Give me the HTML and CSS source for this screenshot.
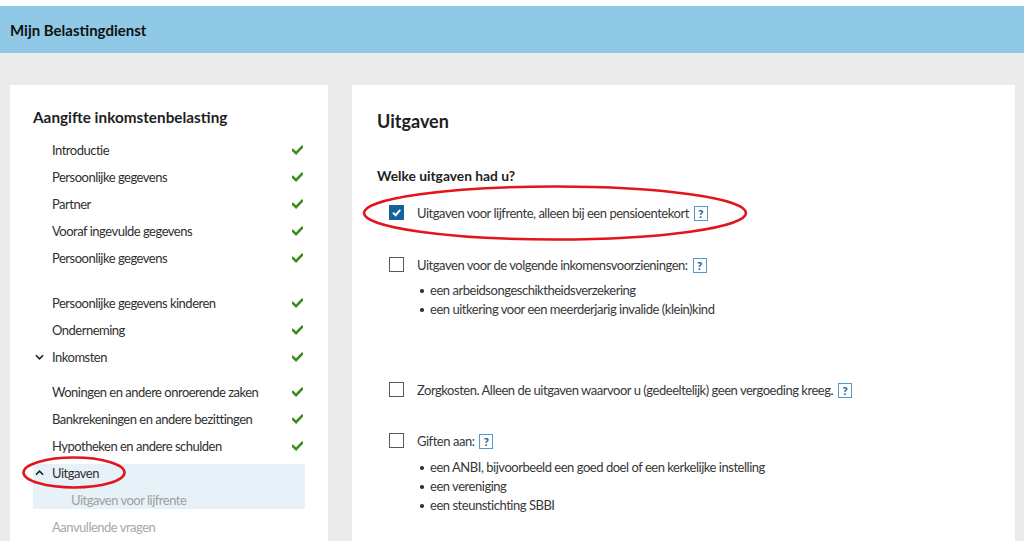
FILE: index.html
```html
<!DOCTYPE html>
<html lang="nl">
<head>
<meta charset="utf-8">
<title>Mijn Belastingdienst - Uitgaven</title>
<link rel="stylesheet" href="styles.css">
</head>
<body>
<div class="page">
  <div class="topstrip"></div>
  <header class="header"><span class="brand">Mijn Belastingdienst</span></header>
  <main class="main">
    <aside class="sidebar">
      <h2 class="side-title">Aangifte inkomstenbelasting</h2>
      <ul class="nav">
        <li class="nav-item"><span class="slot"></span><span class="label">Introductie</span><svg class="check" viewBox="0 0 12 10"><path d="M1 5.2 L4.4 8.4 L11 1.6"/></svg></li>
        <li class="nav-item"><span class="slot"></span><span class="label">Persoonlijke gegevens</span><svg class="check" viewBox="0 0 12 10"><path d="M1 5.2 L4.4 8.4 L11 1.6"/></svg></li>
        <li class="nav-item"><span class="slot"></span><span class="label">Partner</span><svg class="check" viewBox="0 0 12 10"><path d="M1 5.2 L4.4 8.4 L11 1.6"/></svg></li>
        <li class="nav-item"><span class="slot"></span><span class="label">Vooraf ingevulde gegevens</span><svg class="check" viewBox="0 0 12 10"><path d="M1 5.2 L4.4 8.4 L11 1.6"/></svg></li>
        <li class="nav-item"><span class="slot"></span><span class="label">Persoonlijke gegevens</span><svg class="check" viewBox="0 0 12 10"><path d="M1 5.2 L4.4 8.4 L11 1.6"/></svg></li>
        <li class="nav-item group-start"><span class="slot"></span><span class="label">Persoonlijke gegevens kinderen</span><svg class="check" viewBox="0 0 12 10"><path d="M1 5.2 L4.4 8.4 L11 1.6"/></svg></li>
        <li class="nav-item"><span class="slot"></span><span class="label">Onderneming</span><svg class="check" viewBox="0 0 12 10"><path d="M1 5.2 L4.4 8.4 L11 1.6"/></svg></li>
        <li class="nav-item"><span class="slot"><svg class="chev" viewBox="0 0 10 6"><path d="M1 1 L5 5 L9 1"/></svg></span><span class="label">Inkomsten</span><svg class="check" viewBox="0 0 12 10"><path d="M1 5.2 L4.4 8.4 L11 1.6"/></svg></li>
        <li class="nav-item sub-start"><span class="slot"></span><span class="label">Woningen en andere onroerende zaken</span><svg class="check" viewBox="0 0 12 10"><path d="M1 5.2 L4.4 8.4 L11 1.6"/></svg></li>
        <li class="nav-item"><span class="slot"></span><span class="label">Bankrekeningen en andere bezittingen</span><svg class="check" viewBox="0 0 12 10"><path d="M1 5.2 L4.4 8.4 L11 1.6"/></svg></li>
        <li class="nav-item"><span class="slot"></span><span class="label">Hypotheken en andere schulden</span><svg class="check" viewBox="0 0 12 10"><path d="M1 5.2 L4.4 8.4 L11 1.6"/></svg></li>
        <li class="nav-active">
          <div class="nav-row"><span class="slot"><svg class="chev" viewBox="0 0 10 6"><path d="M1 5 L5 1 L9 5"/></svg></span><span class="label">Uitgaven</span></div>
          <div class="nav-row nav-sub"><span class="label">Uitgaven voor lijfrente</span></div>
        </li>
        <li class="nav-item disabled"><span class="slot"></span><span class="label">Aanvullende vragen</span></li>
      </ul>
    </aside>
    <section class="content">
      <h1 class="title">Uitgaven</h1>
      <h3 class="question">Welke uitgaven had u?</h3>
      <div class="option">
        <span class="box checked"><svg viewBox="0 0 15 15"><path d="M4 7.6 L6.6 10.2 L11.2 4.8"/></svg></span>
        <div class="opt-body">
          <div class="opt-label">Uitgaven voor lijfrente, alleen bij een pensioentekort <span class="help">?</span></div>
        </div>
      </div>
      <div class="option opt-2">
        <span class="box"></span>
        <div class="opt-body">
          <div class="opt-label">Uitgaven voor de volgende inkomensvoorzieningen: <span class="help">?</span></div>
          <ul class="bullets">
            <li>een arbeidsongeschiktheidsverzekering</li>
            <li>een uitkering voor een meerderjarig invalide (klein)kind</li>
          </ul>
        </div>
      </div>
      <div class="option opt-3">
        <span class="box"></span>
        <div class="opt-body">
          <div class="opt-label">Zorgkosten. Alleen de uitgaven waarvoor u (gedeeltelijk) geen vergoeding kreeg. <span class="help">?</span></div>
        </div>
      </div>
      <div class="option opt-4">
        <span class="box"></span>
        <div class="opt-body">
          <div class="opt-label">Giften aan: <span class="help">?</span></div>
          <ul class="bullets bullets-gifts">
            <li>een ANBI, bijvoorbeeld een goed doel of een kerkelijke instelling</li>
            <li>een vereniging</li>
            <li>een steunstichting SBBI</li>
          </ul>
        </div>
      </div>
    </section>
  </main>
  <svg class="annotations" viewBox="0 0 1024 541" aria-hidden="true">
    <ellipse cx="555" cy="213" rx="191" ry="26.5"/>
    <ellipse cx="74" cy="472.5" rx="50.5" ry="15"/>
  </svg>
</div>
</body>
</html>
```

FILE: styles.css
```css
* { box-sizing: border-box; }

html, body {
  margin: 0;
  padding: 0;
}

body {
  font-family: Lato, "Liberation Sans", sans-serif;
  font-size: 13px;
  color: #333333;
  background: #ebebeb;
}

.page {
  position: relative;
  width: 1024px;
  height: 541px;
  overflow: hidden;
  display: flex;
  flex-direction: column;
}

.topstrip {
  height: 6px;
  background: #ffffff;
  flex: none;
}

.header {
  height: 47px;
  flex: none;
  background: #8fc9e6;
  padding-left: 10px;
  display: flex;
  align-items: center;
}

.brand {
  font-weight: 700;
  font-size: 15px;
  color: #111111;
  padding-top: 1px;
}

.main {
  flex: 1;
  display: flex;
  gap: 24px;
  padding: 32px 9px 0 10px;
  min-height: 0;
}

.sidebar {
  width: 318px;
  flex: none;
  background: #ffffff;
  padding: 22px 23px 0 23px;
}

.side-title {
  margin: 0 0 9px 0;
  font-size: 15.3px;
  line-height: 20px;
  font-weight: 700;
  color: #1e1e1e;
}

.nav {
  list-style: none;
  margin: 0;
  padding: 0;
}

.nav-item,
.nav-row {
  display: flex;
  align-items: center;
  height: 27px;
  padding-right: 2px;
}

.slot {
  width: 19px;
  flex: none;
  display: flex;
  align-items: center;
}

.label {
  flex: 1;
  color: #303030;
  letter-spacing: -0.5px;
}

.check {
  width: 11px;
  height: 10px;
  flex: none;
  fill: none;
  stroke: #3b8d1c;
  stroke-width: 2.8;
  stroke-linecap: square;
}

.chev {
  width: 9px;
  height: 6px;
  margin-left: 2px;
  fill: none;
  stroke: #222222;
  stroke-width: 1.8;
}

.group-start { margin-top: 18px; }
.sub-start { margin-top: 8px; }

.nav-active {
  background: #e7f2f8;
  margin-top: 4.5px;
}

.nav-active .nav-row {
  height: 18px;
}

.nav-active .nav-sub {
  margin-top: 9px;
  padding-left: 38px;
}

.nav-sub .label { color: #a0a0a0; }

.disabled { margin-top: 4.5px; }
.disabled .label { color: #a8a8a8; }

.content {
  flex: 1;
  background: #ffffff;
  padding: 24px 25px 0 25px;
}

.title {
  margin: 0;
  font-size: 18px;
  line-height: 24px;
  font-weight: 700;
  color: #1e1e1e;
}

.question {
  margin: 34px 0 0 0;
  font-size: 13.8px;
  line-height: 18px;
  font-weight: 700;
  color: #1e1e1e;
}

.option {
  display: flex;
  align-items: flex-start;
  margin-top: 18px;
  padding-left: 12px;
}

.opt-2 { margin-top: 32px; }
.opt-3 { margin-top: 61px; }
.opt-4 { margin-top: 31px; }

.box {
  width: 15px;
  height: 15px;
  flex: none;
  margin-top: 2px;
  margin-right: 13px;
  border: 1.5px solid #5a5a5a;
  background: #ffffff;
}

.box.checked {
  background: #15639a;
  border-color: #15639a;
  display: flex;
}

.box.checked svg {
  width: 15px;
  height: 15px;
  margin: -1.5px;
  fill: none;
  stroke: #ffffff;
  stroke-width: 2;
}

.opt-label {
  line-height: 20px;
  height: 20px;
  color: #383838;
  letter-spacing: -0.47px;
}

.help {
  display: inline-block;
  width: 14px;
  height: 15px;
  margin-left: 2px;
  margin-top: 3px;
  border: 1px solid #4f9bd1;
  color: #1d5c8e;
  font-weight: 900;
  font-size: 11px;
  line-height: 14px;
  letter-spacing: 0;
  text-align: center;
  vertical-align: top;
}

.bullets {
  list-style: none;
  margin: 6px 0 0 0;
  padding: 0;
}

.bullets-gifts { margin-top: 7px; }

.bullets li {
  position: relative;
  line-height: 19px;
  padding-left: 13px;
  color: #383838;
  letter-spacing: -0.47px;
}

.bullets li::before {
  content: "";
  position: absolute;
  left: 3px;
  top: 8px;
  width: 3.5px;
  height: 3.5px;
  border-radius: 50%;
  background: #333333;
}

.annotations {
  position: absolute;
  left: 0;
  top: 0;
  width: 1024px;
  height: 541px;
  pointer-events: none;
  fill: none;
  stroke: #e3141c;
  stroke-width: 2.6;
}
```
